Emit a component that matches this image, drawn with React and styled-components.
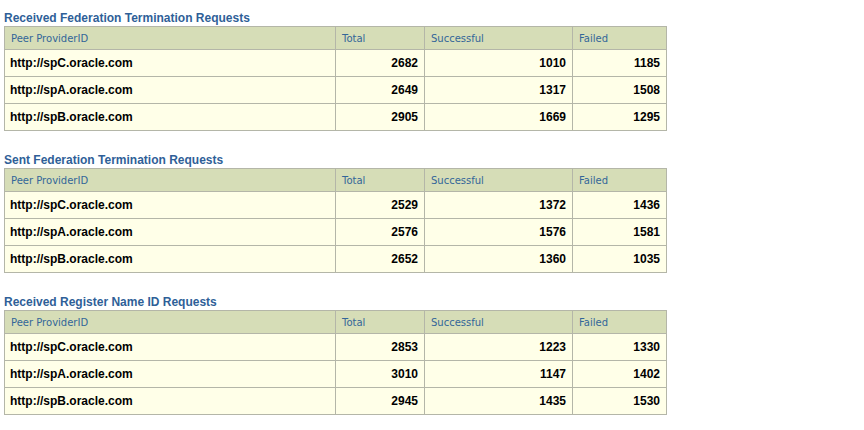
import React from "react";
import styled, { createGlobalStyle } from "styled-components";

const Global = createGlobalStyle`
  html, body { margin: 0; padding: 0; background: #ffffff; }
  body { font-family: "Liberation Sans", Arial, sans-serif; }
`;

const Page = styled.div`
  padding: 10px 4px 0 4px;
  display: flex;
  flex-direction: column;
  gap: 21px;
`;

const Section = styled.section`
  display: flex;
  flex-direction: column;
`;

const Title = styled.h2`
  margin: 0;
  font: bold 12px/16px "Liberation Sans", Arial, sans-serif;
  color: #2f5f98;
`;

const Table = styled.table`
  border-collapse: collapse;
  width: 662px;
  table-layout: fixed;
  border: 1px solid #b4b6a8;
`;

const Th = styled.th`
  box-sizing: border-box;
  width: ${(p) => p.$w}px;
  height: 23px;
  padding: 0 0 0 6px;
  background: #d6ddb7;
  border: 1px solid #b4b6a8;
  text-align: left;
  font: normal 10px "DejaVu Sans", Tahoma, sans-serif;
  color: #336699;
  vertical-align: middle;
`;

const Td = styled.td`
  box-sizing: border-box;
  height: 27px;
  padding: ${(p) => (p.$num ? "0 6px 0 0" : "0 0 0 5px")};
  background: #ffffe8;
  border: 1px solid #b4b6a8;
  text-align: ${(p) => (p.$num ? "right" : "left")};
  font: bold 12px "Liberation Sans", Arial, sans-serif;
  color: #000;
  vertical-align: middle;
`;

const sections = [
  {
    title: "Received Federation Termination Requests",
    rows: [
      ["http://spC.oracle.com", 2682, 1010, 1185],
      ["http://spA.oracle.com", 2649, 1317, 1508],
      ["http://spB.oracle.com", 2905, 1669, 1295],
    ],
  },
  {
    title: "Sent Federation Termination Requests",
    rows: [
      ["http://spC.oracle.com", 2529, 1372, 1436],
      ["http://spA.oracle.com", 2576, 1576, 1581],
      ["http://spB.oracle.com", 2652, 1360, 1035],
    ],
  },
  {
    title: "Received Register Name ID Requests",
    rows: [
      ["http://spC.oracle.com", 2853, 1223, 1330],
      ["http://spA.oracle.com", 3010, 1147, 1402],
      ["http://spB.oracle.com", 2945, 1435, 1530],
    ],
  },
];

const cols = [
  ["Peer ProviderID", 331],
  ["Total", 89],
  ["Successful", 148],
  ["Failed", 94],
];

export default function App() {
  return (
    <>
      <Global />
      <Page>
        {sections.map((s) => (
          <Section key={s.title}>
            <Title>{s.title}</Title>
            <Table>
              <thead>
                <tr>
                  {cols.map(([c, w]) => (
                    <Th key={c} $w={w}>{c}</Th>
                  ))}
                </tr>
              </thead>
              <tbody>
                {s.rows.map((r) => (
                  <tr key={r[0]}>
                    <Td>{r[0]}</Td>
                    <Td $num>{r[1]}</Td>
                    <Td $num>{r[2]}</Td>
                    <Td $num>{r[3]}</Td>
                  </tr>
                ))}
              </tbody>
            </Table>
          </Section>
        ))}
      </Page>
    </>
  );
}
